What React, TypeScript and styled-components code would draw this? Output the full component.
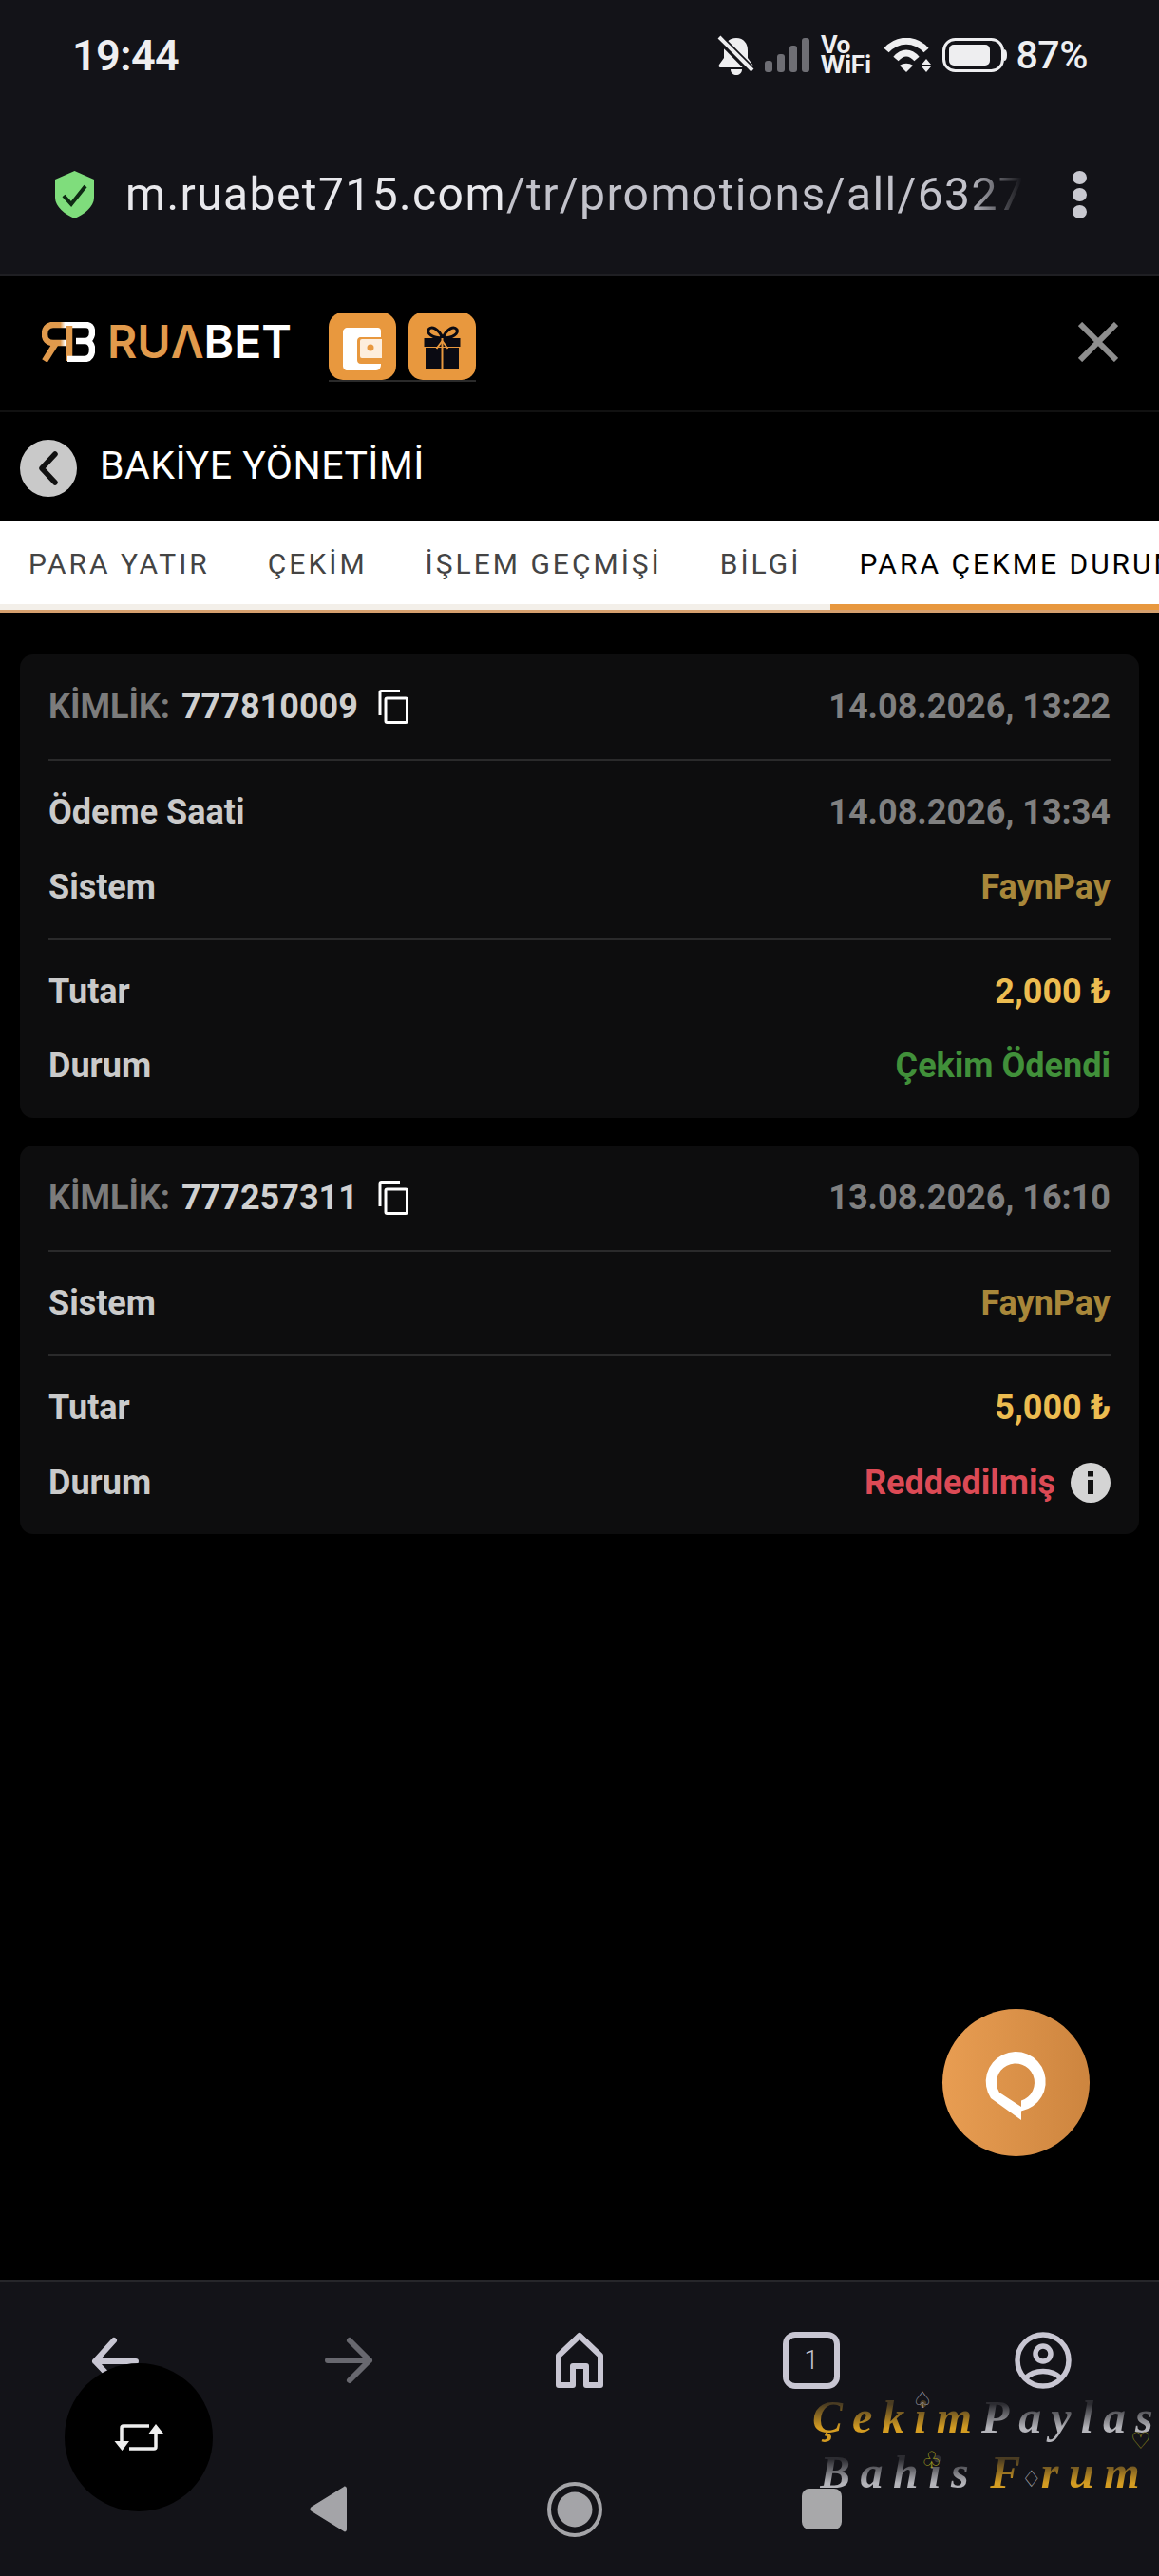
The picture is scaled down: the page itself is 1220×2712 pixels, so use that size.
import React from "react";
import styled, { createGlobalStyle } from "styled-components";

const Global = createGlobalStyle`
  html, body { margin: 0; padding: 0; background: #000; }
  body { font-family: Roboto, "Noto Sans", sans-serif; }
  * { box-sizing: border-box; }
`;

const Page = styled.div`
  position: relative;
  width: 1220px;
  height: 2712px;
  display: flex;
  flex-direction: column;
  overflow: hidden;
  background: #000;
`;

/* ---- browser chrome, top ---- */
const TopChrome = styled.header`
  background: #131318;
  border-bottom: 3px solid #1f1f23;
  height: 291px;
  display: flex;
  flex-direction: column;
`;
const StatusBar = styled.div`
  height: 116px;
  display: flex;
  align-items: center;
  justify-content: space-between;
  padding: 0 75px 0 76px;
  color: #eeeef0;
`;
const Clock = styled.span`
  font: 600 45px/1 Roboto, sans-serif;
  letter-spacing: -0.6px;
`;
const StatusIcons = styled.div`
  display: flex;
  align-items: center;
  gap: 11px;
`;
const VoWifi = styled.span`
  display: flex;
  flex-direction: column;
  font: 700 25px/21px Inter, sans-serif;
  letter-spacing: -0.2px;
  width: 56px;
`;
const Percent = styled.span`
  font: 500 41px/1 Roboto, sans-serif;
  margin-left: -2px;
  letter-spacing: -0.4px;
`;
const UrlRow = styled.div`
  flex: 1;
  display: flex;
  align-items: center;
  padding: 6px 76px 0 58px;
`;
const Url = styled.div`
  margin-left: 33px;
  width: 944px;
  overflow: hidden;
  white-space: nowrap;
  font: 400 48px/64px Roboto, sans-serif;
  letter-spacing: 1.4px;
  color: #c2c2ca;
  -webkit-mask-image: linear-gradient(90deg, #000 94%, transparent 100%);
  mask-image: linear-gradient(90deg, #000 94%, transparent 100%);
`;
const Domain = styled.span`
  color: #e8e8ec;
`;
const MenuDots = styled.div`
  margin-left: auto;
  display: flex;
  flex-direction: column;
  gap: 4px;
`;
const MenuDot = styled.span`
  width: 15px;
  height: 14px;
  border-radius: 50%;
  background: #c9c9d0;
`;

/* ---- site header ---- */
const SiteHeader = styled.div`
  height: 143px;
  display: flex;
  align-items: center;
  padding: 0 43px 3px 44px;
  border-bottom: 2px solid #111;
`;
const Logo = styled.div`
  display: flex;
  align-items: center;
  gap: 13px;
`;
const Wordmark = styled.span`
  font: 600 48px/1 Inter, sans-serif;
  color: #fff;
  letter-spacing: 0;
`;
const WordOrange = styled.span`
  color: #e19a4c;
`;
const TileGroup = styled.div`
  margin: 11px 0 0 39px;
  display: flex;
  gap: 13px;
  border-bottom: 2px solid #2a2a2a;
`;
const Tile = styled.div`
  width: 71px;
  height: 71px;
  border-radius: 15px;
  background: #e8983e;
  display: flex;
`;
const CloseBtn = styled.div`
  margin: 0 0 0 auto;
  display: flex;
`;

const BackRow = styled.div`
  height: 115px;
  display: flex;
  align-items: center;
  gap: 24px;
  padding: 2px 0 0 21px;
`;
const BackCircle = styled.div`
  width: 60px;
  height: 60px;
  border-radius: 50%;
  background: #c9c9c9;
  display: flex;
  align-items: center;
  justify-content: center;
`;
const Title = styled.h1`
  margin: 0 0 4px;
  font: 400 41px/1 Roboto, sans-serif;
  color: #fff;
  letter-spacing: 0.5px;
`;

/* ---- tabs ---- */
const TabBar = styled.nav`
  height: 96px;
  flex: none;
  display: flex;
  overflow: hidden;
  background: #fff;
  border-bottom: 3px solid #d6a06e;
`;
const Tab = styled.div<{ $active?: boolean }>`
  flex: none;
  display: flex;
  align-items: center;
  padding: 2px 31px 0 30px;
  height: ${(p) => (p.$active ? "96px" : "93px")};
  border-bottom: ${(p) => (p.$active ? "9px solid #e8983e" : "6px solid #f3efe9")};
  font: 400 30px/1 Roboto, sans-serif;
  letter-spacing: 3px;
  white-space: nowrap;
  color: ${(p) => (p.$active ? "#000" : "#444")};
`;

/* ---- cards ---- */
const Main = styled.main`
  flex: 1;
  padding: 44px 21px 0;
  display: flex;
  flex-direction: column;
  gap: 29px;
`;
const Card = styled.section`
  background: #0d0d0e;
  border-radius: 14px;
  padding: 0 30px;
`;
const CardHead = styled.div`
  height: 110px;
  display: flex;
  align-items: center;
  justify-content: space-between;
  font: 700 36px/1 Roboto, sans-serif;
`;
const IdGroup = styled.div`
  display: flex;
  align-items: center;
`;
const IdLabel = styled.span`
  color: #7c7c7c;
`;
const IdValue = styled.span`
  color: #d0d0d0;
  margin-left: 12px;
`;
const CopyBtn = styled.span`
  margin-left: 21px;
  display: flex;
`;
const DateText = styled.span`
  color: #808080;
`;
const Section = styled.div`
  border-top: 2px solid #2a2a2b;
  padding: 15px 0;
`;
const Row = styled.div`
  height: 78.4px;
  display: flex;
  align-items: center;
  justify-content: space-between;
  font: 700 36px/1 Roboto, sans-serif;
`;
const Label = styled.span`
  color: #cacaca;
`;
const tones = {
  date: "#808080",
  system: "#a8873a",
  amount: "#ecbc50",
  paid: "#41903a",
  rejected: "#dc4a55",
};
const Value = styled.span<{ $tone: keyof typeof tones }>`
  color: ${(p) => tones[p.$tone]};
  display: flex;
  align-items: center;
`;
const InfoDot = styled.span`
  margin-left: 16px;
  width: 42px;
  height: 42px;
  border-radius: 50%;
  background: #d4d4d4;
  display: flex;
  align-items: center;
  justify-content: center;
`;

/* ---- floating ---- */
const ChatFab = styled.div`
  position: absolute;
  left: 992px;
  top: 2115px;
  width: 155px;
  height: 155px;
  border-radius: 50%;
  background: linear-gradient(90deg, #e89d52, #cd853f);
  display: flex;
`;
const SwapFab = styled.div`
  position: absolute;
  left: 68px;
  top: 2488px;
  width: 156px;
  height: 156px;
  border-radius: 50%;
  background: #000;
  display: flex;
  align-items: center;
  justify-content: center;
`;

/* ---- browser chrome, bottom ---- */
const BottomChrome = styled.footer`
  flex: none;
  height: 312px;
  background: #131318;
  border-top: 3px solid #26262a;
  display: flex;
  flex-direction: column;
`;
const Toolbar = styled.div`
  height: 164px;
  display: grid;
  grid-template-columns: repeat(5, 1fr);
  align-items: center;
  justify-items: center;
`;
const TabCount = styled.div`
  width: 60px;
  height: 60px;
  border: 6px solid #c8c6d2;
  border-radius: 13px;
  display: flex;
  align-items: center;
  justify-content: center;
  font: 300 27px/1 Roboto, sans-serif;
  color: #c8c6d2;
`;
const SystemNav = styled.div`
  flex: 1;
  display: flex;
  align-items: center;
  justify-content: center;
  gap: 210px;
  padding: 4px 8px 0 0;
`;
const SquareBtn = styled.div`
  width: 42px;
  height: 43px;
  border-radius: 8px;
  background: #a8a8aa;
`;

/* ---- watermark ---- */
const Watermark = styled.div`
  position: absolute;
  left: 855px;
  top: 2516px;
  width: 365px;
  font: italic 700 48px/58px "Liberation Serif", serif;
  white-space: nowrap;
`;
const MarkLine = styled.div<{ $spacing: number; $indent: number }>`
  letter-spacing: ${(p) => p.$spacing}px;
  margin-left: ${(p) => p.$indent}px;
`;
const MarkWord = styled.span<{ $gold?: boolean }>`
  background: ${(p) =>
    p.$gold
      ? "linear-gradient(180deg, #4a3c22 25%, #d49c22 72%)"
      : "linear-gradient(180deg, #2c2c31 25%, #b4b4ba 72%)"};
  -webkit-background-clip: text;
  background-clip: text;
  color: transparent;
`;
const MarkGap = styled.span<{ $width: number }>`
  display: inline-block;
  width: ${(p) => p.$width}px;
`;
const Suit = styled.span<{ $x: number; $y: number; $color: string }>`
  position: absolute;
  left: ${(p) => p.$x}px;
  top: ${(p) => p.$y}px;
  font: 400 24px/1 "DejaVu Sans", sans-serif;
  color: ${(p) => p.$color};
`;

/* ---- icons ---- */
const BellOff = () => (
  <svg width="39" height="42" viewBox="0 0 39 42">
    <path d="M20 3c8 0 12 6 12 13v8l5 7c1 2 0 3-2 3H4c-2 0-3-1-2-3l5-7v-8C7 9 12 3 20 3z" fill="#eeeef0" />
    <path d="M14 36h12c0 4-3 6-6 6s-6-2-6-6z" fill="#eeeef0" />
    <path d="M1 2l36 36" stroke="#131318" strokeWidth="9" />
    <path d="M2 2l35 35" stroke="#eeeef0" strokeWidth="4" />
  </svg>
);
const Signal = () => (
  <svg width="47" height="36" viewBox="0 0 47 36" fill="#6e6e74">
    <rect x="0" y="24" width="8" height="12" rx="3" />
    <rect x="13" y="17" width="8" height="19" rx="3" />
    <rect x="26" y="8" width="8" height="28" rx="3" />
    <rect x="39" y="0" width="8" height="36" rx="3" />
  </svg>
);
const Wifi = () => (
  <svg width="51" height="36" viewBox="0 0 51 36">
    <path d="M3 13C15 0 33 0 45 13" fill="none" stroke="#eeeef0" strokeWidth="7" />
    <path d="M13 22C20 14 28 14 35 22" fill="none" stroke="#eeeef0" strokeWidth="7" />
    <path d="M17 29c4-3 10-3 14 0l-7 7z" fill="#eeeef0" />
    <path d="M40 28l5-6 5 6zM40 30l5 6 5-6z" fill="#eeeef0" />
  </svg>
);
const Battery = () => (
  <svg width="68" height="36" viewBox="0 0 68 36">
    <rect x="1.5" y="1.5" width="62" height="33" rx="12" fill="none" stroke="#eeeef0" strokeWidth="3" />
    <rect x="7" y="7" width="43" height="22" rx="5" fill="#eeeef0" />
    <path d="M65 12c2 0 3 2 3 6s-1 6-3 6z" fill="#eeeef0" />
  </svg>
);
const Shield = () => (
  <svg width="41" height="50" viewBox="0 0 41 50">
    <path d="M20.500 0L41 9v19c0 10-11 18-20.500 22C11 46 0 38 0 28V9z" fill="#7fdd7c" />
    <path d="M9 26l8 9L32 16" fill="none" stroke="#0f2a14" strokeWidth="4" />
  </svg>
);
const LogoMark = () => (
  <svg width="56" height="42" viewBox="0 0 56 42" fill="none" strokeWidth="6.5">
    <defs>
      <linearGradient id="mark" x1="0" y1="0" x2="1" y2="0">
        <stop offset="0.55" stopColor="#e19a4c" />
        <stop offset="0.72" stopColor="#fff" />
      </linearGradient>
    </defs>
    <path d="M33 3H12C5 3 3 8 3 13s3 9 9 9h18" stroke="url(#mark)" />
    <path d="M29 4v37" stroke="#e19a4c" />
    <path d="M15 22L3 41" stroke="#e19a4c" />
    <path d="M33 3h13c6 0 7 4 7 8s-2 9-8 9h-9 9c6 0 8 4 8 9s-2 10-8 10H27" stroke="#fff" />
  </svg>
);
const WalletIcon = () => (
  <svg width="71" height="71" viewBox="0 0 71 71">
    <path d="M20 16h31c3 0 4 1 4 4v6H34c-3 0-4 2-4 4v20c0 2 1 4 4 4h21v1c0 3-2 6-5 6H20c-3 0-5-2-5-5V21c0-3 2-5 5-5z" fill="#fff" />
    <path d="M35 27h22v22H35c-2 0-3-1-3-3V30c0-2 1-3 3-3z" fill="#fdeedd" stroke="#e8983e" strokeWidth="2" />
    <circle cx="44" cy="37" r="3.500" fill="#e8983e" />
  </svg>
);
const GiftIcon = () => (
  <svg width="71" height="71" viewBox="0 0 71 71">
    <path d="M36 27C31 16 24 14 21 18c-2 4 4 9 15 9zM36 27c5-11 12-13 15-9 2 4-4 9-15 9z" fill="none" stroke="#0a0a12" strokeWidth="3" />
    <rect x="16.500" y="27" width="38" height="9" fill="#0a0a12" />
    <rect x="18" y="37" width="35" height="22" fill="#0a0a12" />
    <path d="M35.500 27v32" stroke="#e8983e" strokeWidth="2" />
    <path d="M35.500 30l-6 8M35.500 30l6 8" stroke="#e8983e" strokeWidth="2" />
  </svg>
);
const CloseIcon = () => (
  <svg width="42" height="42" viewBox="0 0 42 42">
    <path d="M2 2l38 38M40 2L2 40" stroke="#8e8e8e" strokeWidth="6" />
  </svg>
);
const BackChevron = () => (
  <svg width="22" height="36" viewBox="0 0 22 36">
    <path d="M18 3L4 18l14 15" fill="none" stroke="#111" strokeWidth="5.500" strokeLinecap="round" strokeLinejoin="round" />
  </svg>
);
const CopyIcon = () => (
  <svg width="32" height="36" viewBox="0 0 32 36" fill="none" stroke="#fff" strokeWidth="3">
    <path d="M2 27V3c0-1 .5-1.500 1.500-1.500H23" />
    <rect x="8" y="9" width="22.500" height="25.500" rx="1.500" />
  </svg>
);
const InfoIcon = () => (
  <svg width="10" height="24" viewBox="0 0 10 24" fill="#111">
    <rect x="2" y="0" width="6" height="5.500" />
    <rect x="2" y="9" width="6" height="15" />
  </svg>
);
const ChatIcon = () => (
  <svg width="155" height="155" viewBox="0 0 155 155">
    <path
      fillRule="evenodd"
      fill="#fff"
      d="M83 117V107.500A31.500 31.500 0 1 0 51 94zM83 103V96.500A20 20 0 1 0 60 88z"
    />
  </svg>
);
const SwapIcon = () => (
  <svg width="52" height="28" viewBox="0 0 52 28">
    <path d="M37 2H10a2 2 0 0 0-2 2v15M16 26h26a2 2 0 0 0 2-2V9" fill="none" stroke="#eee" strokeWidth="3.500" />
    <path d="M.5 18H16L8.500 28zM36.500 10H52L44 0z" fill="#eee" />
  </svg>
);
const ArrowLeft = () => (
  <svg width="60" height="60" viewBox="0 0 60 60" fill="none" stroke="#c8c6d2" strokeWidth="6" strokeLinecap="round" strokeLinejoin="round">
    <path d="M28 9L8 31l20 21M8 31h43" />
  </svg>
);
const ArrowRight = () => (
  <svg width="60" height="60" viewBox="0 0 60 60" fill="none" stroke="#68686f" strokeWidth="6" strokeLinecap="round" strokeLinejoin="round">
    <path d="M32 9l21 21-21 21M9 30h44" />
  </svg>
);
const HomeIcon = () => (
  <svg width="60" height="60" viewBox="0 0 60 60" fill="none" stroke="#c8c6d2" strokeWidth="6" strokeLinejoin="round">
    <path d="M8 25L30 4l22 21v31H37V36H23v20H8z" />
  </svg>
);
const ProfileIcon = () => (
  <svg width="60" height="60" viewBox="0 0 60 60" fill="none" stroke="#c8c6d2" strokeWidth="5.500">
    <circle cx="30" cy="30" r="27" />
    <circle cx="30" cy="23" r="8" />
    <path d="M11 49c10-10 28-10 38 0" />
  </svg>
);
const NavBack = () => (
  <svg width="40" height="49" viewBox="0 0 40 49">
    <path d="M39 3v43c0 2-2 3-3 2L2 27c-2-1-2-4 0-5L36 1c1-1 3 0 3 2z" fill="#a4a4a8" />
  </svg>
);
const NavHome = () => (
  <svg width="58" height="58" viewBox="0 0 58 58">
    <circle cx="29" cy="29" r="27" fill="none" stroke="#a4a4a8" strokeWidth="4" />
    <circle cx="29" cy="29" r="18.500" fill="#a4a4a8" />
  </svg>
);

type Item = { label: string; value: string; tone: keyof typeof tones; info?: boolean };
const cards: { id: string; date: string; top: Item[]; bottom: Item[] }[] = [
  {
    id: "777810009",
    date: "14.08.2026, 13:22",
    top: [
      { label: "Ödeme Saati", value: "14.08.2026, 13:34", tone: "date" },
      { label: "Sistem", value: "FaynPay", tone: "system" },
    ],
    bottom: [
      { label: "Tutar", value: "2,000 ₺", tone: "amount" },
      { label: "Durum", value: "Çekim Ödendi", tone: "paid" },
    ],
  },
  {
    id: "777257311",
    date: "13.08.2026, 16:10",
    top: [{ label: "Sistem", value: "FaynPay", tone: "system" }],
    bottom: [
      { label: "Tutar", value: "5,000 ₺", tone: "amount" },
      { label: "Durum", value: "Reddedilmiş", tone: "rejected", info: true },
    ],
  },
];

const tabs = ["PARA YATIR", "ÇEKİM", "İŞLEM GEÇMİŞİ", "BİLGİ", "PARA ÇEKME DURUMU"];

const Rows = ({ items }: { items: Item[] }) => (
  <Section>
    {items.map((it) => (
      <Row key={it.label}>
        <Label>{it.label}</Label>
        <Value $tone={it.tone}>
          {it.value}
          {it.info && (
            <InfoDot>
              <InfoIcon />
            </InfoDot>
          )}
        </Value>
      </Row>
    ))}
  </Section>
);

export default function App() {
  return (
    <Page>
      <Global />
      <TopChrome>
        <StatusBar>
          <Clock>19:44</Clock>
          <StatusIcons>
            <BellOff />
            <Signal />
            <VoWifi>
              <span>Vo</span>
              <span>WiFi</span>
            </VoWifi>
            <Wifi />
            <Battery />
            <Percent>87%</Percent>
          </StatusIcons>
        </StatusBar>
        <UrlRow>
          <Shield />
          <Url>
            <Domain>m.ruabet715.com</Domain>/tr/promotions/all/6327
          </Url>
          <MenuDots>
            <MenuDot />
            <MenuDot />
            <MenuDot />
          </MenuDots>
        </UrlRow>
      </TopChrome>

      <SiteHeader>
        <Logo>
          <LogoMark />
          <Wordmark>
            <WordOrange>RUΛ</WordOrange>BET
          </Wordmark>
        </Logo>
        <TileGroup>
          <Tile>
            <WalletIcon />
          </Tile>
          <Tile>
            <GiftIcon />
          </Tile>
        </TileGroup>
        <CloseBtn>
          <CloseIcon />
        </CloseBtn>
      </SiteHeader>

      <BackRow>
        <BackCircle>
          <BackChevron />
        </BackCircle>
        <Title>BAKİYE YÖNETİMİ</Title>
      </BackRow>

      <TabBar>
        {tabs.map((t, i) => (
          <Tab key={t} $active={i === tabs.length - 1}>
            {t}
          </Tab>
        ))}
      </TabBar>

      <Main>
        {cards.map((c) => (
          <Card key={c.id}>
            <CardHead>
              <IdGroup>
                <IdLabel>KİMLİK:</IdLabel>
                <IdValue>{c.id}</IdValue>
                <CopyBtn>
                  <CopyIcon />
                </CopyBtn>
              </IdGroup>
              <DateText>{c.date}</DateText>
            </CardHead>
            <Rows items={c.top} />
            <Rows items={c.bottom} />
          </Card>
        ))}
      </Main>

      <ChatFab>
        <ChatIcon />
      </ChatFab>

      <BottomChrome>
        <Toolbar>
          <ArrowLeft />
          <ArrowRight />
          <HomeIcon />
          <TabCount>1</TabCount>
          <ProfileIcon />
        </Toolbar>
        <SystemNav>
          <NavBack />
          <NavHome />
          <SquareBtn />
        </SystemNav>
      </BottomChrome>

      <SwapFab>
        <SwapIcon />
      </SwapFab>

      <Watermark>
        <MarkLine $spacing={10} $indent={0}>
          <MarkWord $gold>Çekim</MarkWord>
          <MarkWord>Paylas</MarkWord>
        </MarkLine>
        <MarkLine $spacing={10.5} $indent={8}>
          <MarkWord>Bahis</MarkWord>
          <MarkGap $width={12} />
          <MarkWord $gold>F</MarkWord>
          <MarkGap $width={11} />
          <MarkWord $gold>rum</MarkWord>
        </MarkLine>
        <Suit $x={105} $y={-1} $color="#9a9aa6">♤</Suit>
        <Suit $x={115} $y={62} $color="#a5a020">♧</Suit>
        <Suit $x={335} $y={42} $color="#8f8a1c">♡</Suit>
        <Suit $x={220} $y={82} $color="#a9a9b0">♢</Suit>
      </Watermark>
    </Page>
  );
}
